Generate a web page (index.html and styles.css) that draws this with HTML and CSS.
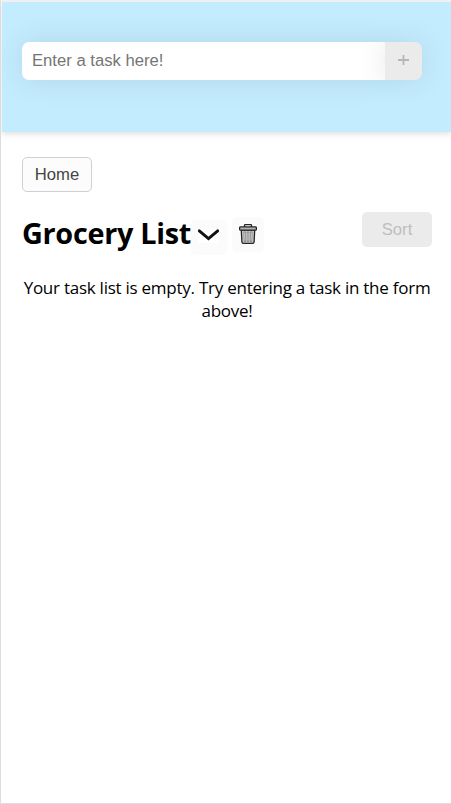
FILE: index.html
```html
<!DOCTYPE html>
<html lang="en">
<head>
<meta charset="utf-8">
<title>Grocery List</title>
<link rel="stylesheet" href="styles.css">
</head>
<body>
<div class="app">
  <header class="header">
    <form class="task-form">
      <input class="task-input" type="text" placeholder="Enter a task here!" aria-label="Task">
      <button class="add" type="button" disabled aria-label="Add task">
        <svg width="11" height="11" viewBox="0 0 11 11"><path d="M0 5h11M5.5 0v10" stroke="#b7b7b7" stroke-width="1.8"/></svg>
      </button>
    </form>
  </header>
  <main class="main">
    <button class="home" type="button">Home</button>
    <div class="list-bar">
      <h1 class="title">Grocery List</h1>
      <button class="icon-button menu" type="button" aria-label="Choose list">
        <svg width="21" height="14" viewBox="0 0 21 14"><path fill="#fff" d="M0 0h21v14H0z"/><path d="M1.300 1.800 10.500 9.600 19.700 1.800" fill="none" stroke="#111" stroke-width="2.900" stroke-linecap="round"/></svg>
      </button>
      <button class="icon-button trash" type="button" aria-label="Delete list">
        <svg width="18" height="20" viewBox="0 0 18 20" fill="none" stroke="#252525">
          <path d="M5.500 3V1.300Q5.500 .6 6.200 .6h5.600q.7 0 .7.700V3" stroke-width="1.300"/>
          <path d="M2.300 6.200 2.900 18q.1 1.300 1.300 1.300h9.600q1.200 0 1.300-1.300l.6-11.800z" fill="#c4c4c4" stroke-width="1.300"/>
          <rect x=".6" y="2.900" width="16.800" height="3.300" rx="1" fill="#b5b5b5" stroke-width="1.300"/>
          <path d="m5.700 8.500.3 8.300M9 8.500v8.300m3.300-8.300-.3 8.300" stroke="#777" stroke-width="2.200" stroke-linecap="round"/>
          <path d="m5.700 8.500.3 8.300M9 8.500v8.300m3.300-8.300-.3 8.300" stroke="#ddd" stroke-width="1"/>
        </svg>
      </button>
      <button class="sort" type="button" disabled>Sort</button>
    </div>
    <p class="empty">Your task list is empty. Try entering a task in the form above!</p>
  </main>
</div>
</body>
</html>
```
FILE: styles.css
```css
* { box-sizing: border-box; }

body {
  margin: 0;
  background: #fff;
  font-family: "Segoe UI", "Open Sans", "Noto Sans", sans-serif;
  color: #000;
}

button, input {
  font: 16.67px "Liberation Sans", Arial, sans-serif;
  border: 0;
  padding: 0;
  margin: 0;
}

.app {
  height: 804px;
  border-top: 2px solid #f0f0f0;
  border-left: 1px solid #ddd;
  border-bottom: 1px solid #ddd;
  padding-left: 1px;
  overflow: hidden;
}

.header {
  height: 130px;
  padding: 40px 29px 0 20px;
  background: #c4ecff;
  box-shadow: 0 2px 6px rgba(0, 0, 0, .13);
}

.task-form {
  display: flex;
  height: 38px;
}

.task-input, .add {
  box-shadow: 0 0 30px rgba(0, 0, 0, .1);
}

.task-input {
  flex: 1;
  min-width: 0;
  padding: 0 10px;
  background: #fff;
  border-radius: 7px 0 0 7px;
}

.task-input::placeholder { color: #757575; }

.add {
  display: flex;
  align-items: center;
  justify-content: center;
  width: 37px;
  padding-bottom: 1px;
  background: #ebebeb;
  border-radius: 0 7px 7px 0;
}

.main { padding: 25px 19px 0 20px; }

.home {
  display: block;
  width: 70px;
  height: 35px;
  border: 1px solid #d0d0d0;
  border-radius: 5px;
  background: #fcfcfc;
  color: #444;
}

.list-bar {
  display: flex;
  align-items: flex-start;
  height: 40px;
  margin-top: 20px;
}

.title {
  width: 169px;
  margin: 1px 0 0;
  font-size: 28.8px;
  line-height: 40px;
  font-weight: 700;
  letter-spacing: -.28px;
  white-space: nowrap;
}

.icon-button {
  display: flex;
  align-items: center;
  justify-content: center;
  border-radius: 5px;
  background: #fbfbfb;
}

.menu {
  width: 36px;
  height: 35px;
  margin-top: 8px;
  padding: 0 2px 4px 0;
}

.trash {
  width: 32px;
  height: 35px;
  margin: 5px 0 0 5px;
  padding-bottom: 1px;
}

.sort {
  width: 70px;
  height: 35px;
  margin-left: auto;
  border-radius: 5px;
  background: #ebebeb;
  color: #bebebe;
}

.empty {
  margin: 24px 0 0;
  font-size: 17px;
  line-height: 23px;
  letter-spacing: -.25px;
  text-align: center;
}
```
